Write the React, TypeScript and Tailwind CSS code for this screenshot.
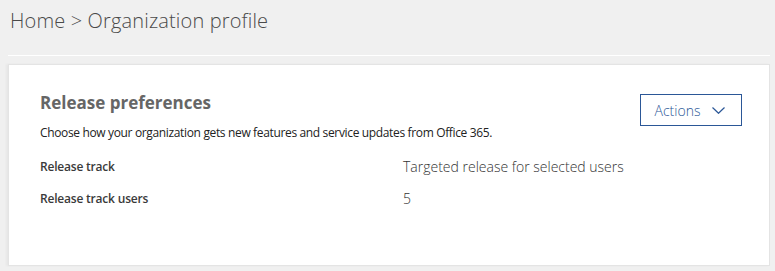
import React from "react";

export default function App() {
  return (
    <div className="w-[775px] h-[271px] bg-[#f0f0f0] overflow-hidden" style={{ fontFamily: '"Open Sans", "Noto Sans", sans-serif' }}>
      <div className="h-[55px] pl-[10px] pt-[6px]">
        <div className="text-[20px] leading-[30px] font-light text-[#4a4a4a] tracking-[0.15px]">Home &gt; Organization profile</div>
      </div>
      <div className="ml-[8px] mr-[5px] h-px bg-white" />
      <div className="ml-[8px] mr-[5px] mt-[8px] h-[202px] bg-white border border-[#e4e4e4] shadow-[-2px_0_2px_rgba(0,0,0,0.04)] px-[31px] pt-[26px]">
        <div className="flex items-start justify-between">
          <div>
            <div className="text-[17px] leading-[24px] font-bold text-[#666]">Release preferences</div>
            <div className="mt-[10px] text-[12px] leading-[16px] text-[#222] tracking-[-0.35px]">
              Choose how your organization gets new features and service updates from Office 365.
            </div>
          </div>
          <button className="mt-[3px] mr-[-4px] w-[102px] h-[32px] border border-[#2b5797] flex items-center justify-center gap-[12px] pr-[2px] text-[#2b5797] text-[14px] font-light">
            <span>Actions</span>
            <svg width="13" height="7" viewBox="0 0 13 7" fill="none" stroke="#2b5797" strokeWidth="1.2">
              <path d="M0.5 0.5 L6.5 6.3 L12.5 0.5" />
            </svg>
          </button>
        </div>
        <div className="mt-[17px] grid grid-cols-[363px_1fr] gap-y-[14px] items-center">
          <div className="text-[12px] leading-[18px] font-semibold text-[#3a3a3a] tracking-[-0.2px]">Release track</div>
          <div className="text-[14px] leading-[18px] font-light text-[#333]">Targeted release for selected users</div>
          <div className="text-[12px] leading-[18px] font-semibold text-[#3a3a3a] tracking-[-0.2px]">Release track users</div>
          <div className="text-[14px] leading-[18px] font-light text-[#333]">5</div>
        </div>
      </div>
    </div>
  );
}
